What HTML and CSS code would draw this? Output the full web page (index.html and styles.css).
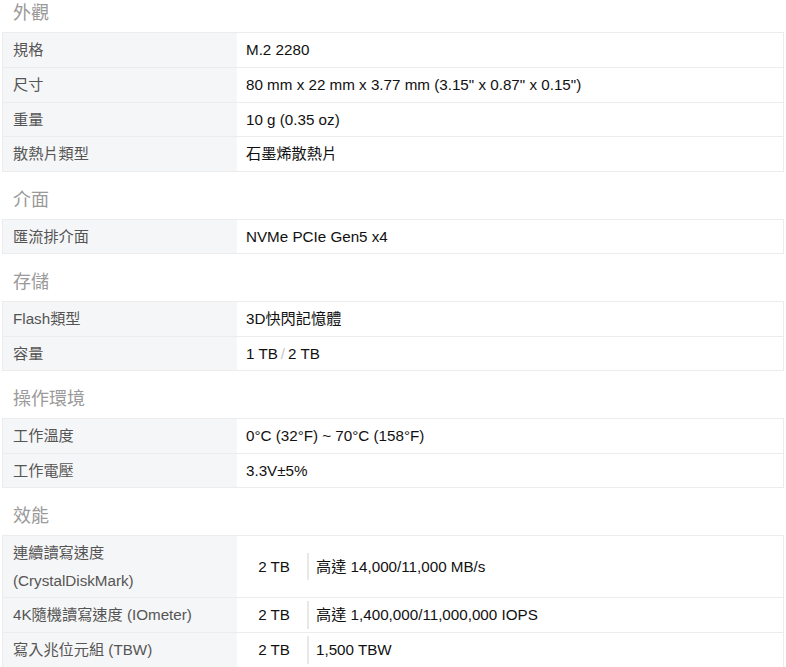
FILE: index.html
```html
<!DOCTYPE html>
<html lang="zh-Hant">
<head>
<meta charset="utf-8">
<link rel="stylesheet" href="styles.css">
</head>
<body>
<div class="specs">
  <section class="group">
    <h2 class="group-title">外觀</h2>
    <div class="table">
      <div class="row"><div class="label">規格</div><div class="value">M.2 2280</div></div>
      <div class="row"><div class="label">尺寸</div><div class="value">80 mm x 22 mm x 3.77 mm (3.15" x 0.87" x 0.15")</div></div>
      <div class="row"><div class="label">重量</div><div class="value">10 g (0.35 oz)</div></div>
      <div class="row"><div class="label">散熱片類型</div><div class="value">石墨烯散熱片</div></div>
    </div>
  </section>
  <section class="group">
    <h2 class="group-title">介面</h2>
    <div class="table">
      <div class="row"><div class="label">匯流排介面</div><div class="value">NVMe PCIe Gen5 x4</div></div>
    </div>
  </section>
  <section class="group">
    <h2 class="group-title">存儲</h2>
    <div class="table">
      <div class="row"><div class="label">Flash類型</div><div class="value">3D快閃記憶體</div></div>
      <div class="row"><div class="label">容量</div><div class="value">1 TB<span class="sep">/</span>2 TB</div></div>
    </div>
  </section>
  <section class="group">
    <h2 class="group-title">操作環境</h2>
    <div class="table">
      <div class="row"><div class="label">工作溫度</div><div class="value">0°C (32°F) ~ 70°C (158°F)</div></div>
      <div class="row"><div class="label">工作電壓</div><div class="value">3.3V±5%</div></div>
    </div>
  </section>
  <section class="group">
    <h2 class="group-title">效能</h2>
    <div class="table">
      <div class="row"><div class="label">連續讀寫速度<br>(CrystalDiskMark)</div><div class="value split"><span class="cap">2 TB</span><span class="spec">高達 14,000/11,000 MB/s</span></div></div>
      <div class="row"><div class="label">4K隨機讀寫速度 (IOmeter)</div><div class="value split"><span class="cap">2 TB</span><span class="spec">高達 1,400,000/11,000,000 IOPS</span></div></div>
      <div class="row"><div class="label">寫入兆位元組 (TBW)</div><div class="value split"><span class="cap">2 TB</span><span class="spec">1,500 TBW</span></div></div>
    </div>
  </section>
</div>
</body>
</html>
```
FILE: styles.css
```css
* { box-sizing: border-box; }
html, body { margin: 0; padding: 0; background: #fff; }
body {
  font-family: "Liberation Sans", Arial, "Noto Sans CJK TC", sans-serif;
  font-size: 15.2px;
  color: #222;
}
.specs { margin: 0 2px; width: 782px; }
.group + .group { margin-top: 14.5px; }
.group-title {
  margin: 0 0 6px 0;
  padding-left: 11px;
  font-size: 18px;
  font-weight: normal;
  line-height: 26px;
  color: #9a9a9a;
}
.table {
  border: 1px solid #ececec;
  border-bottom: none;
}
.row {
  display: grid;
  grid-template-columns: 234px 1fr;
  border-bottom: 1px solid #ececec;
}
.label {
  background: #f5f6f7;
  color: #555;
  padding: 3px 10px;
  line-height: 27.75px;
  display: flex;
  flex-direction: column;
  justify-content: center;
}
.value {
  background: #fff;
  color: #111;
  padding: 3px 9px;
  line-height: 27.75px;
  display: flex;
  align-items: center;
}
.sep { color: #c8c8c8; margin: 0 3px; }
.split { padding-left: 0; }
.cap {
  width: 70px;
  text-align: right;
  padding-right: 17px;
}
.spec {
  border-left: 2px solid #e8e8e8;
  padding-left: 7px;
}
```
